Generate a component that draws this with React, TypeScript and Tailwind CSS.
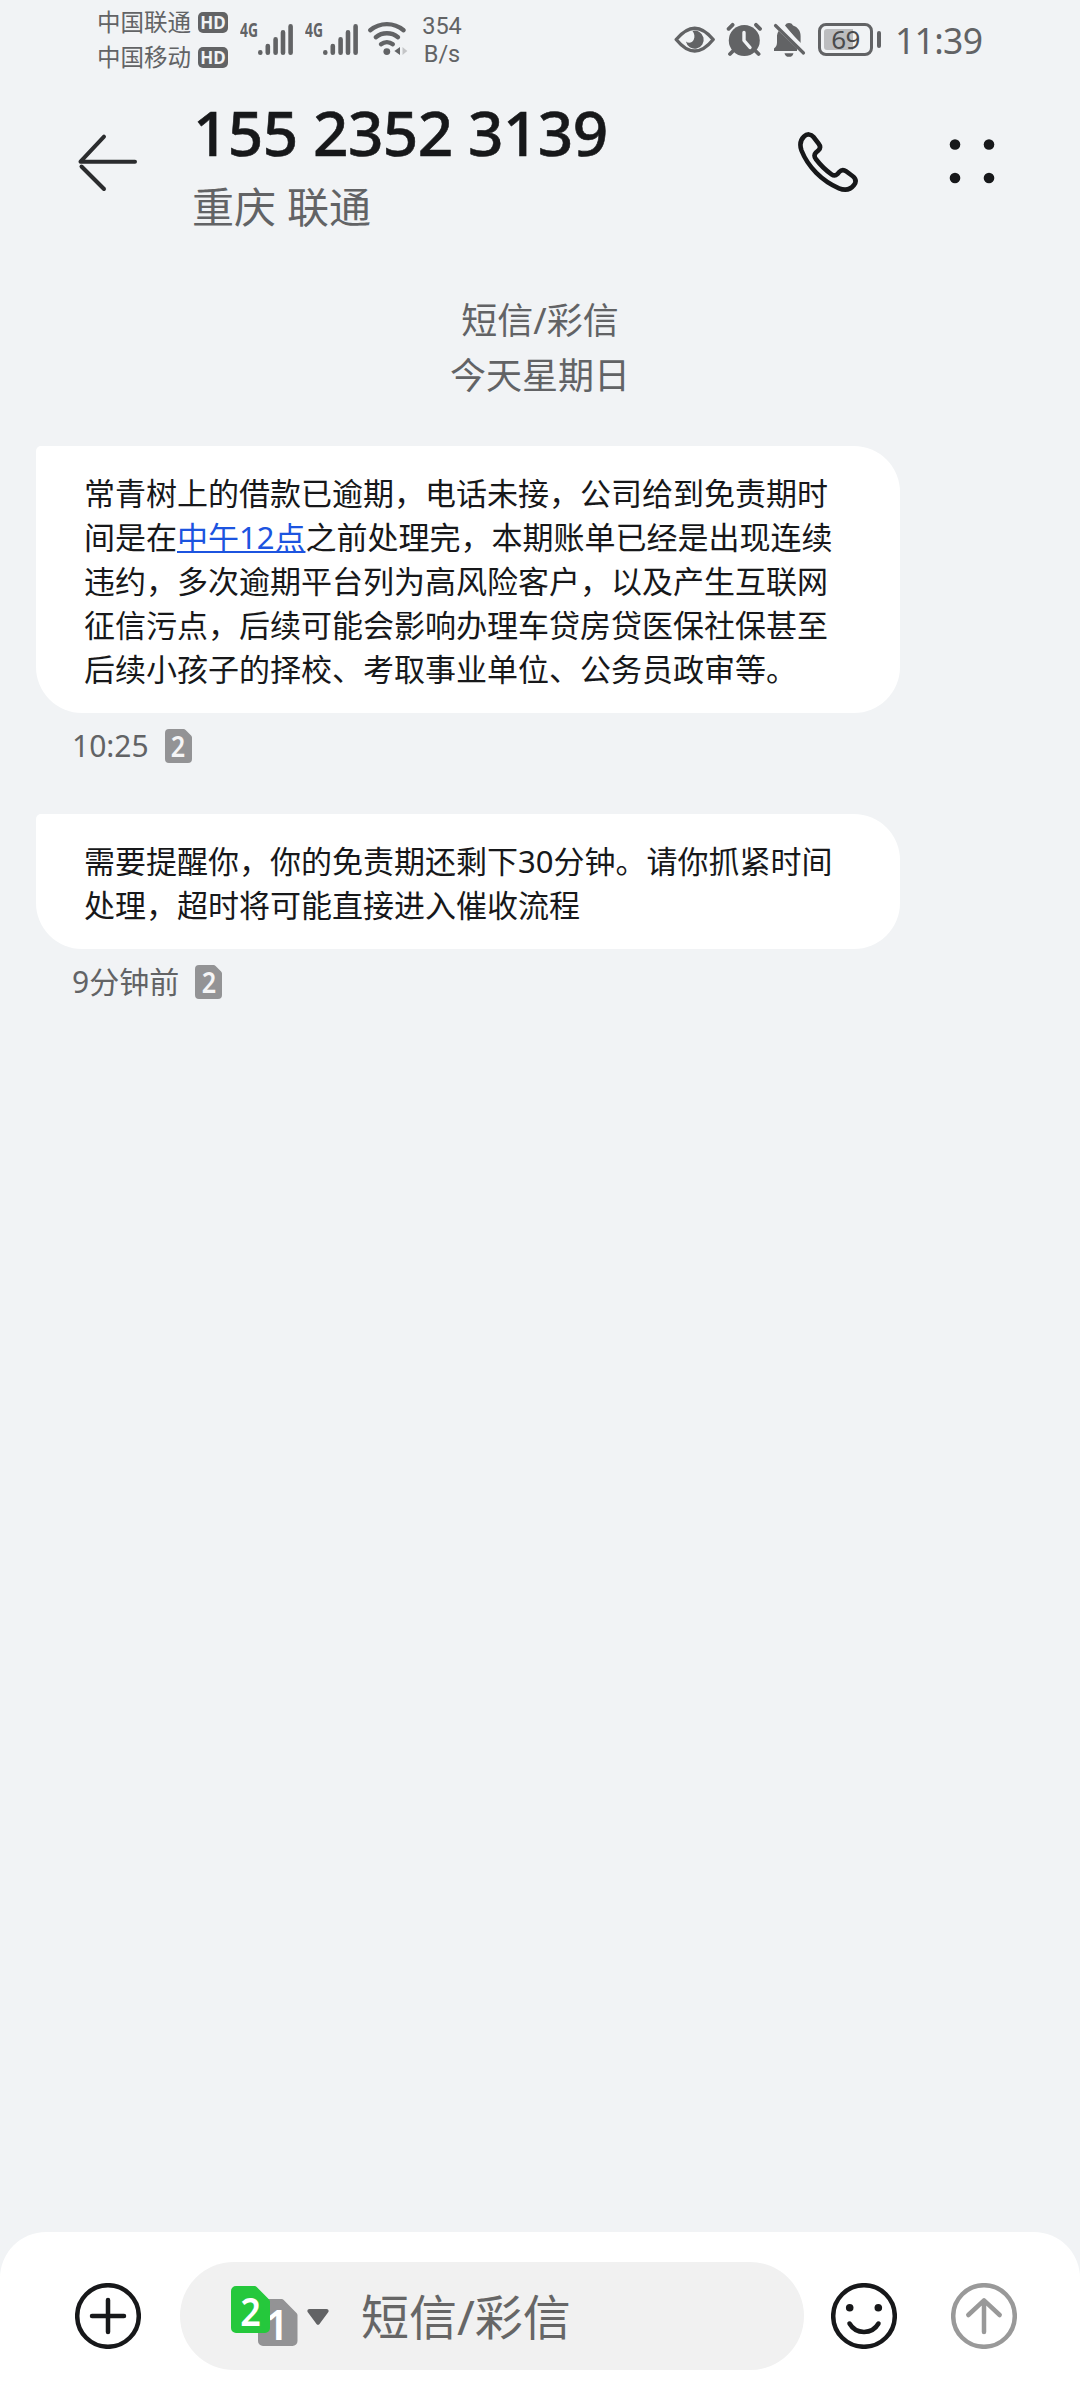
import React from "react";

type Message = {
  id: number;
  body: React.ReactNode;
  time: string;
};

const messages: Message[] = [
  {
    id: 1,
    body: (
      <>
        常青树上的借款已逾期，电话未接，公司给到免责期时
        <br />
        间是在
        <span className="text-[#1c54e0] underline decoration-2 underline-offset-[2px]">
          中午12点
        </span>
        之前处理完，本期账单已经是出现连续
        <br />
        违约，多次逾期平台列为高风险客户，以及产生互联网
        <br />
        征信污点，后续可能会影响办理车贷房贷医保社保甚至
        <br />
        后续小孩子的择校、考取事业单位、公务员政审等。
      </>
    ),
    time: "10:25",
  },
  {
    id: 2,
    body: (
      <>
        需要提醒你，你的免责期还剩下30分钟。请你抓紧时间
        <br />
        处理，超时将可能直接进入催收流程
      </>
    ),
    time: "9分钟前",
  },
];

const Carrier: React.FC<{ name: string }> = ({ name }) => (
  <div className="flex h-[35px] items-center gap-[7px]">
    <span className="w-[94px] text-[23.5px] leading-none">{name}</span>
    <span className="flex h-[21px] w-[30px] items-center justify-center rounded-[5px] bg-[#626365] text-[17px] leading-none font-bold text-[#f1f3f5]">
      HD
    </span>
  </div>
);

const Signal: React.FC = () => (
  <svg width="54" height="46" viewBox="0 -10 54 46" className="block">
    <text
      x="0"
      y="15"
      fontSize="20"
      fontWeight="700"
      textLength="18"
      lengthAdjust="spacingAndGlyphs"
      fill="#626365"
    >
      4G
    </text>
    <g stroke="#626365" strokeWidth="4.6" strokeLinecap="round">
      <path d="M20.3 30.4v.4M27.8 24v6.8M35.6 17.4v13.4M43 10.4v20.4M50.6 4.4v26.4" />
    </g>
  </svg>
);

const Wifi: React.FC = () => (
  <svg width="42" height="36" viewBox="0 0 42 36" className="block">
    <g fill="none" stroke="#626365" strokeWidth="4.4" strokeLinecap="round">
      <path d="M3.2 10.2a26 26 0 0 1 33.4 0" />
      <path d="M8.8 17.2a17.5 17.5 0 0 1 22.2 0" />
      <path d="M14 24.2a9.5 9.5 0 0 1 11.8 0" />
    </g>
    <circle cx="19.8" cy="31.6" r="3.4" fill="#626365" />
    <path d="M33 27v8l-5.6-4z" fill="#626365" />
    <path d="M35.5 27v8l4.8-4z" fill="#c4c5c7" />
  </svg>
);

const SimBadge: React.FC = () => (
  <span className="relative flex h-[34px] w-[27px] items-center justify-center">
    <svg width="27" height="34" viewBox="0 0 27 34" className="absolute inset-0">
      <path
        d="M4 0h14.5a3 3 0 0 1 2.1.9l5.5 5.5a3 3 0 0 1 .9 2.1V30a4 4 0 0 1-4 4H4a4 4 0 0 1-4-4V4a4 4 0 0 1 4-4z"
        fill="#939395"
      />
    </svg>
    <span className="relative scale-x-90 text-[28px] leading-none font-semibold text-[#f5f5f6]">
      2
    </span>
  </span>
);

const StatusBar: React.FC = () => (
  <div className="flex h-20 items-start justify-between px-[97px] text-[#626365]">
    <div className="flex items-start">
      <div className="flex flex-col pt-[5px]">
        <Carrier name="中国联通" />
        <Carrier name="中国移动" />
      </div>
      <div className="ml-3 flex gap-[11px] pt-3">
        <Signal />
        <Signal />
      </div>
      <div className="ml-2 pt-5">
        <Wifi />
      </div>
      <div className="ml-3 w-[42px] pt-3 text-center font-[Roboto,sans-serif] text-[23.5px] leading-[28px]">
        354
        <br />
        B/s
      </div>
    </div>
    <div className="flex items-start">
      <svg width="42" height="28" viewBox="0 0 42 28" className="mt-[26px]">
        <path
          d="M2.2 13.5C8.5 6 14.5 2.2 20.7 2.2S33 6 39.2 13.5C33 21.2 27 25 20.7 25S8.5 21.2 2.2 13.5z"
          fill="none"
          stroke="#626365"
          strokeWidth="3.4"
          strokeLinejoin="round"
        />
        <path
          d="M18.5 4.900a9 9 0 1 1-6.600 10.600c2.600 2.200 6.400 1.400 7.800-1.700 1.400-3.200.8-6.300-1.200-8.900z"
          fill="#626365"
        />
      </svg>
      <svg width="36" height="36" viewBox="0 0 36 36" className="ml-[10px] mt-[22px]">
        <circle cx="18.3" cy="18.5" r="15.5" fill="#626365" />
        <path
          d="M18 10.5v8l6 7"
          fill="none"
          stroke="#f1f3f5"
          strokeWidth="3.4"
          strokeLinecap="round"
          strokeLinejoin="round"
        />
        <path
          d="M2.6 6.8l4-4M30 2.8l4 4M7 29l-3 3M29.6 29l3 3"
          stroke="#626365"
          strokeWidth="3.8"
          strokeLinecap="round"
        />
      </svg>
      <svg width="34" height="36" viewBox="0 0 34 36" className="ml-[11px] mt-[22px]">
        <path
          d="M12 3.5C13 1.8 14.2 1 16 1s3.2.8 4 2.500c4.800 1.600 7.600 5.300 7.600 10.500v8zM4 13.500c.3-1.800.8-3.300 1.600-4.600L24 26.500V29H1v-2.500c2-1.500 3-3.500 3-6z"
          fill="#626365"
        />
        <path d="M11.5 31.2h9a4.6 4.6 0 0 1-9 0z" fill="#626365" />
        <path d="M5.5.5L33 28" stroke="#f1f3f5" strokeWidth="2.5" />
        <path d="M2.5 3.5l28 27.5" stroke="#626365" strokeWidth="3.2" strokeLinecap="round" />
      </svg>
      <div className="relative ml-[11px] mt-[23px] flex h-[33px] w-[55px] items-center justify-center rounded-[8px] border-[3.5px] border-[#626365]">
        <div className="absolute top-[3px] left-[3px] h-[21px] w-[29px] rounded-l-[3px] bg-[#bcbdbf]" />
        <span className="relative -top-px text-[26px] leading-none tracking-[-0.5px] text-[#4a4b4d]">
          69
        </span>
      </div>
      <div className="ml-1 mt-[31px] h-[17px] w-1 rounded-full bg-[#626365]" />
      <span className="ml-[14px] mt-[19px] w-[88px] text-[35.5px] leading-[42px] tracking-[-0.7px]">
        11:39
      </span>
    </div>
  </div>
);

const Header: React.FC = () => (
  <header className="flex h-[170px] items-start pl-[75px] pr-[85px]">
    <svg
      width="64"
      height="60"
      viewBox="0 0 64 60"
      className="mt-[52px]"
      fill="none"
      stroke="#2b2c2e"
      strokeWidth="4"
      strokeLinecap="round"
    >
      <path d="M60 29.7H5.5L29 4.7" strokeLinejoin="round" />
      <path d="M6.5 34.5L29 57" />
    </svg>
    <div className="ml-[53px] flex-1">
      <h1 className="mt-5 pl-px text-[62px] leading-[64px] font-medium tracking-[-0.6px] whitespace-nowrap text-[#17181a] [-webkit-text-stroke:0.6px_#17181a]">
        155 2352 3139
      </h1>
      <p className="mt-[15px] text-[42px] leading-[56px] text-[#626365]">重庆 联通</p>
    </div>
    <svg
      width="62"
      height="62"
      viewBox="0 0 62 62"
      className="mt-[51px]"
      fill="none"
      stroke="#17181a"
      strokeWidth="4.6"
      strokeLinejoin="round"
    >
      <path d="M7 5.500C10 2.500 14 2.800 16.500 6L21.500 12.500C23.500 15 23.500 17.500 21.300 19.500L19 21.500C17 23.500 17 25.500 18.800 28C23 33.500 29 39.500 34.500 43.300C36.800 45 38.500 45 40.300 43.200L42.200 41C44.500 38.500 46.700 38.500 49.300 40.400L55.500 45C59 47.700 59.300 51 57 54C53.500 58.500 48.500 60 42 57.300C25 50 11 36 4.500 19.500C2.500 13.800 3.300 9 7 5.500z" />
    </svg>
    <svg width="46" height="46" viewBox="0 0 46 46" className="ml-[90px] mt-[58px]" fill="#17181a">
      <circle cx="6" cy="6.5" r="5.3" />
      <circle cx="40" cy="6.5" r="5.3" />
      <circle cx="6" cy="40" r="5.3" />
      <circle cx="40" cy="40" r="5.3" />
    </svg>
  </header>
);

const Composer: React.FC = () => (
  <footer className="flex h-[168px] items-start rounded-t-[46px] bg-white pt-[30px] pl-[75px]">
    <svg
      width="66"
      height="66"
      viewBox="0 0 66 66"
      className="mt-[21px]"
      fill="none"
      stroke="#17181a"
      strokeWidth="4.5"
      strokeLinecap="round"
    >
      <circle cx="33" cy="33" r="30.8" />
      <path d="M33 17v32M17 33h32" />
    </svg>
    <div className="ml-[39px] flex h-[108px] w-[624px] items-center rounded-full bg-[#f1f1f1] pl-[51px]">
      {/* SIM switcher, active card on top */}
      <div className="relative h-[60px] w-[67px]">
        <svg width="67" height="60" viewBox="0 0 67 60" className="absolute inset-0">
          <path
            d="M32 13h18.5a3 3 0 0 1 2.2.9L65.5 27a3 3 0 0 1 1 2.2V55a5 5 0 0 1-5 5H32a5 5 0 0 1-5-5V18a5 5 0 0 1 5-5z"
            fill="#939395"
          />
        </svg>
        <span className="absolute top-[17px] left-[34px] text-[42px] leading-[42px] font-semibold text-white">
          1
        </span>
        <svg width="39" height="47" viewBox="0 0 39 47" className="absolute top-0 left-0">
          <path
            d="M5 0h18.5a3 3 0 0 1 2.2.9l12.4 12.5a3 3 0 0 1 .9 2.2V42a5 5 0 0 1-5 5H5a5 5 0 0 1-5-5V5a5 5 0 0 1 5-5z"
            fill="#25c83c"
          />
        </svg>
        <span className="absolute top-1 left-2 scale-x-90 text-[40px] leading-[42px] font-semibold text-white">
          2
        </span>
      </div>
      <svg width="22" height="17" viewBox="0 0 22 17" className="ml-[9px] mt-[3px]">
        <path
          d="M2.5 0h17c2 0 2.8 2 1.5 3.5l-8.5 11.5a2 2 0 0 1-3 0L1 3.5C-.3 2 .5 0 2.5 0z"
          fill="#626365"
        />
      </svg>
      <span className="ml-8 pt-[2px] text-[48px] leading-[60px] text-[#666666]">短信/彩信</span>
    </div>
    <svg
      width="66"
      height="66"
      viewBox="0 0 66 66"
      className="ml-[27px] mt-[21px]"
      fill="none"
      stroke="#17181a"
      strokeWidth="4.5"
      strokeLinecap="round"
    >
      <circle cx="33" cy="33" r="30.8" />
      <path d="M18.5 40.5c6.5 11.2 22.5 11.2 29 0" />
      <circle cx="18.7" cy="24.8" r="3.8" fill="#17181a" stroke="none" />
      <circle cx="47.3" cy="24.8" r="3.8" fill="#17181a" stroke="none" />
    </svg>
    <svg
      width="66"
      height="66"
      viewBox="0 0 66 66"
      className="ml-[54px] mt-[21px]"
      fill="none"
      stroke="#999999"
      strokeWidth="4.5"
      strokeLinecap="round"
      strokeLinejoin="round"
    >
      <circle cx="33" cy="33" r="30.8" />
      <path d="M33 49V17.5M17.3 32L33 17.3 48.7 32" />
    </svg>
  </footer>
);

const App: React.FC = () => {
  return (
    <div className="flex h-[2400px] w-[1080px] flex-col overflow-hidden bg-[#f1f3f5] font-['Noto_Sans','Noto_Sans_CJK_SC',sans-serif]">
      <StatusBar />
      <Header />

      {/* Conversation */}
      <main className="flex-1">
        <div className="pt-[43px] text-center text-[36px] leading-[55px] text-[#626365]">
          <p>短信/彩信</p>
          <p>今天星期日</p>
        </div>
        <div className="mt-[43px] flex flex-col gap-[33px] pl-9">
          {messages.map((m) => (
            <div key={m.id}>
              <div className="w-[864px] rounded-[46px] rounded-tl-[5px] bg-white pt-[25px] pb-[22px] pl-[48px] text-[31px] leading-[44px] whitespace-nowrap text-[#17181a]">
                {m.body}
              </div>
              <div className="flex h-[68px] items-center gap-4 pb-[3px] pl-9 text-[30px] text-[#626365]">
                <span>{m.time}</span>
                <SimBadge />
              </div>
            </div>
          ))}
        </div>
      </main>

      <Composer />
    </div>
  );
};

export default App;
